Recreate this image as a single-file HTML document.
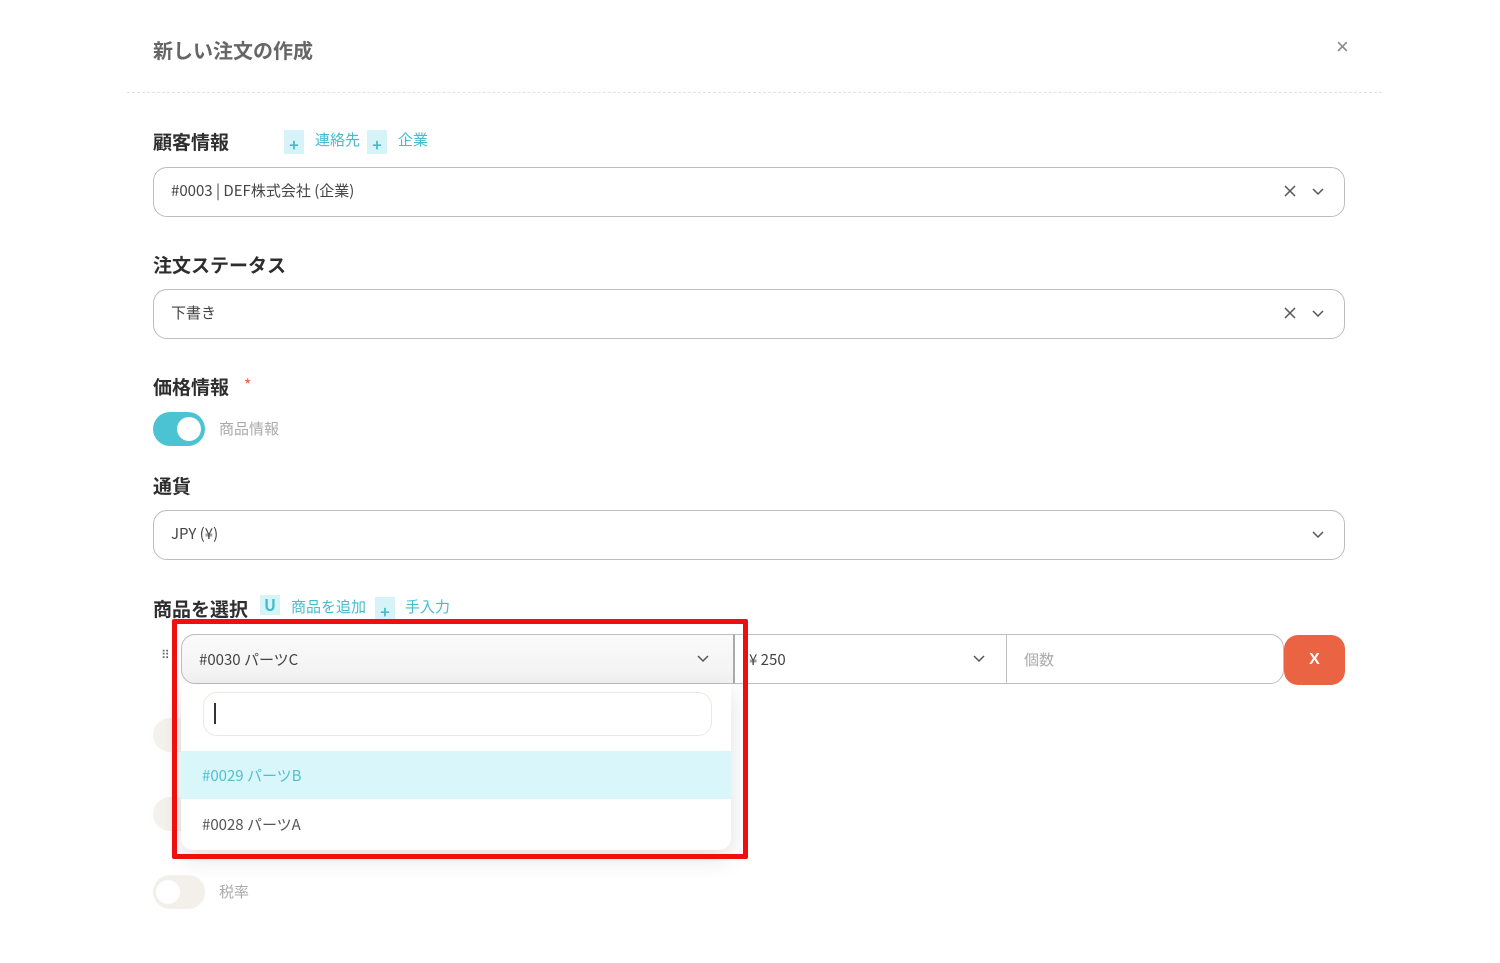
<!DOCTYPE html>
<html><head><meta charset="utf-8"><style>
body{margin:0;width:1500px;height:963px;background:#fff;position:relative;overflow:hidden;font-family:"Noto Sans CJK JP","Liberation Sans",sans-serif;color:#333}
.a{position:absolute}
.lbl{font-size:19px;color:#2e2e2e;font-weight:bold;line-height:26px}
.inp{position:absolute;left:153px;width:1190px;height:48px;border:1px solid #bdbdbd;border-radius:14px;background:#fff}
.inp span{position:absolute;left:17px;top:12px;font-size:15px;color:#444;line-height:22px}
.ic{position:absolute;top:14px}
.tag{position:absolute;width:20px;height:24px;background:#d6f3f7;color:#45bccd;font-size:16px;font-weight:bold;text-align:center;line-height:28px}
.link{position:absolute;color:#45bccd;font-size:15px;line-height:20px}
.tog{position:absolute;left:153px;width:52px;height:34px;border-radius:17px}
.tog i{position:absolute;top:5px;width:24px;height:24px;border-radius:50%;background:#fff}
</style></head><body>
<div class="a" style="left:153px;top:36px;font-size:20px;color:#666;font-weight:bold;line-height:28px">新しい注文の作成</div>
<div class="a" style="left:1336px;top:34px;font-size:22px;color:#888;font-family:'Liberation Sans'">×</div>
<div class="a" style="left:127px;top:92px;width:1255px;border-top:1px dashed #e2e2e2"></div>

<div class="a lbl" style="left:153px;top:129px">顧客情報</div>
<div class="tag" style="left:284px;top:130px">+</div><div class="link" style="left:315px;top:130px">連絡先</div>
<div class="tag" style="left:367px;top:130px">+</div><div class="link" style="left:398px;top:130px">企業</div>
<div class="inp" style="top:167px"><span>#0003 | DEF株式会社 (企業)</span>
<svg class="ic" style="left:1128px" width="16" height="18"><path d="M3 4l10 10M13 4L3 14" stroke="#555" stroke-width="1.5"/></svg>
<svg class="ic" style="left:1156px" width="16" height="18"><path d="M3 7l5 5 5-5" stroke="#555" stroke-width="1.5" fill="none"/></svg></div>

<div class="a lbl" style="left:153px;top:252px">注文ステータス</div>
<div class="inp" style="top:289px"><span>下書き</span>
<svg class="ic" style="left:1128px" width="16" height="18"><path d="M3 4l10 10M13 4L3 14" stroke="#555" stroke-width="1.5"/></svg>
<svg class="ic" style="left:1156px" width="16" height="18"><path d="M3 7l5 5 5-5" stroke="#555" stroke-width="1.5" fill="none"/></svg></div>

<div class="a lbl" style="left:153px;top:374px">価格情報</div>
<div class="a" style="left:244px;top:372px;color:#e8623f;font-size:16px">*</div>
<div class="tog" style="top:412px;background:#4cc3d3"><i style="left:24px"></i></div>
<div class="a" style="left:219px;top:418px;font-size:15px;color:#aaa;line-height:22px">商品情報</div>

<div class="a lbl" style="left:153px;top:473px">通貨</div>
<div class="inp" style="top:510px"><span>JPY (¥)</span>
<svg class="ic" style="left:1156px" width="16" height="18"><path d="M3 7l5 5 5-5" stroke="#555" stroke-width="1.5" fill="none"/></svg></div>

<div class="a lbl" style="left:153px;top:596px">商品を選択</div>
<div class="tag" style="left:260px;top:595px;height:20px;line-height:18px">U</div><div class="link" style="left:291px;top:597px">商品を追加</div>
<div class="tag" style="left:375px;top:597px">+</div><div class="link" style="left:405px;top:597px">手入力</div>

<div class="a" style="left:161px;top:646px;font-size:12px;color:#666">⠿</div>
<div class="tog" style="top:718px;background:#f5f2ee"></div>
<div class="tog" style="top:797px;background:#f5f2ee"></div>
<div class="tog" style="top:875px;background:#f3f0ec"><i style="left:3px"></i></div>
<div class="a" style="left:219px;top:881px;font-size:15px;color:#aaa;line-height:22px">税率</div>

<div class="a" style="left:181px;top:634px;width:551px;height:48px;border:1px solid #bdbdbd;border-radius:14px 0 0 14px;background:linear-gradient(#fafafa,#f2f2f2)"></div>
<div class="a" style="left:199px;top:649px;font-size:15px;color:#444;line-height:22px">#0030 パーツC</div>
<svg class="a" style="left:695px;top:651px" width="16" height="18"><path d="M3 5l5 5 5-5" stroke="#555" stroke-width="1.5" fill="none"/></svg>
<div class="a" style="left:733px;top:634px;width:272px;height:48px;border:1px solid #bdbdbd;border-left:2px solid #aaa;background:#fff"></div>
<div class="a" style="left:749px;top:649px;font-size:15px;color:#444;line-height:22px">¥ 250</div>
<svg class="a" style="left:971px;top:651px" width="16" height="18"><path d="M3 5l5 5 5-5" stroke="#555" stroke-width="1.5" fill="none"/></svg>
<div class="a" style="left:1006px;top:634px;width:276px;height:48px;border:1px solid #bdbdbd;border-radius:0 14px 14px 0;background:#fff"></div>
<div class="a" style="left:1024px;top:649px;font-size:15px;color:#aaa;line-height:22px">個数</div>
<div class="a" style="left:1284px;top:635px;width:61px;height:50px;border-radius:14px;background:#ea6343;color:#fff;font-weight:bold;font-size:16px;text-align:center;line-height:50px;font-family:'Liberation Sans'">X</div>

<div class="a" style="left:181px;top:684px;width:550px;height:166px;background:#fff;border-radius:0 0 12px 12px;box-shadow:0 8px 24px rgba(0,0,0,.12)"></div>
<div class="a" style="left:203px;top:692px;width:507px;height:42px;border:1px solid #eee8df;border-radius:14px;background:#fff"></div>
<div class="a" style="left:214px;top:703px;width:2px;height:21px;background:#333"></div>
<div class="a" style="left:181px;top:751px;width:550px;height:48px;background:#d9f6fa"></div>
<div class="a" style="left:202px;top:765px;font-size:15px;color:#52c0cf;line-height:22px">#0029 パーツB</div>
<div class="a" style="left:202px;top:814px;font-size:15px;color:#555;line-height:22px">#0028 パーツA</div>

<div class="a" style="left:172px;top:619px;width:566px;height:230px;border:5px solid #ee0f0f;border-radius:2px"></div>
</body></html>
